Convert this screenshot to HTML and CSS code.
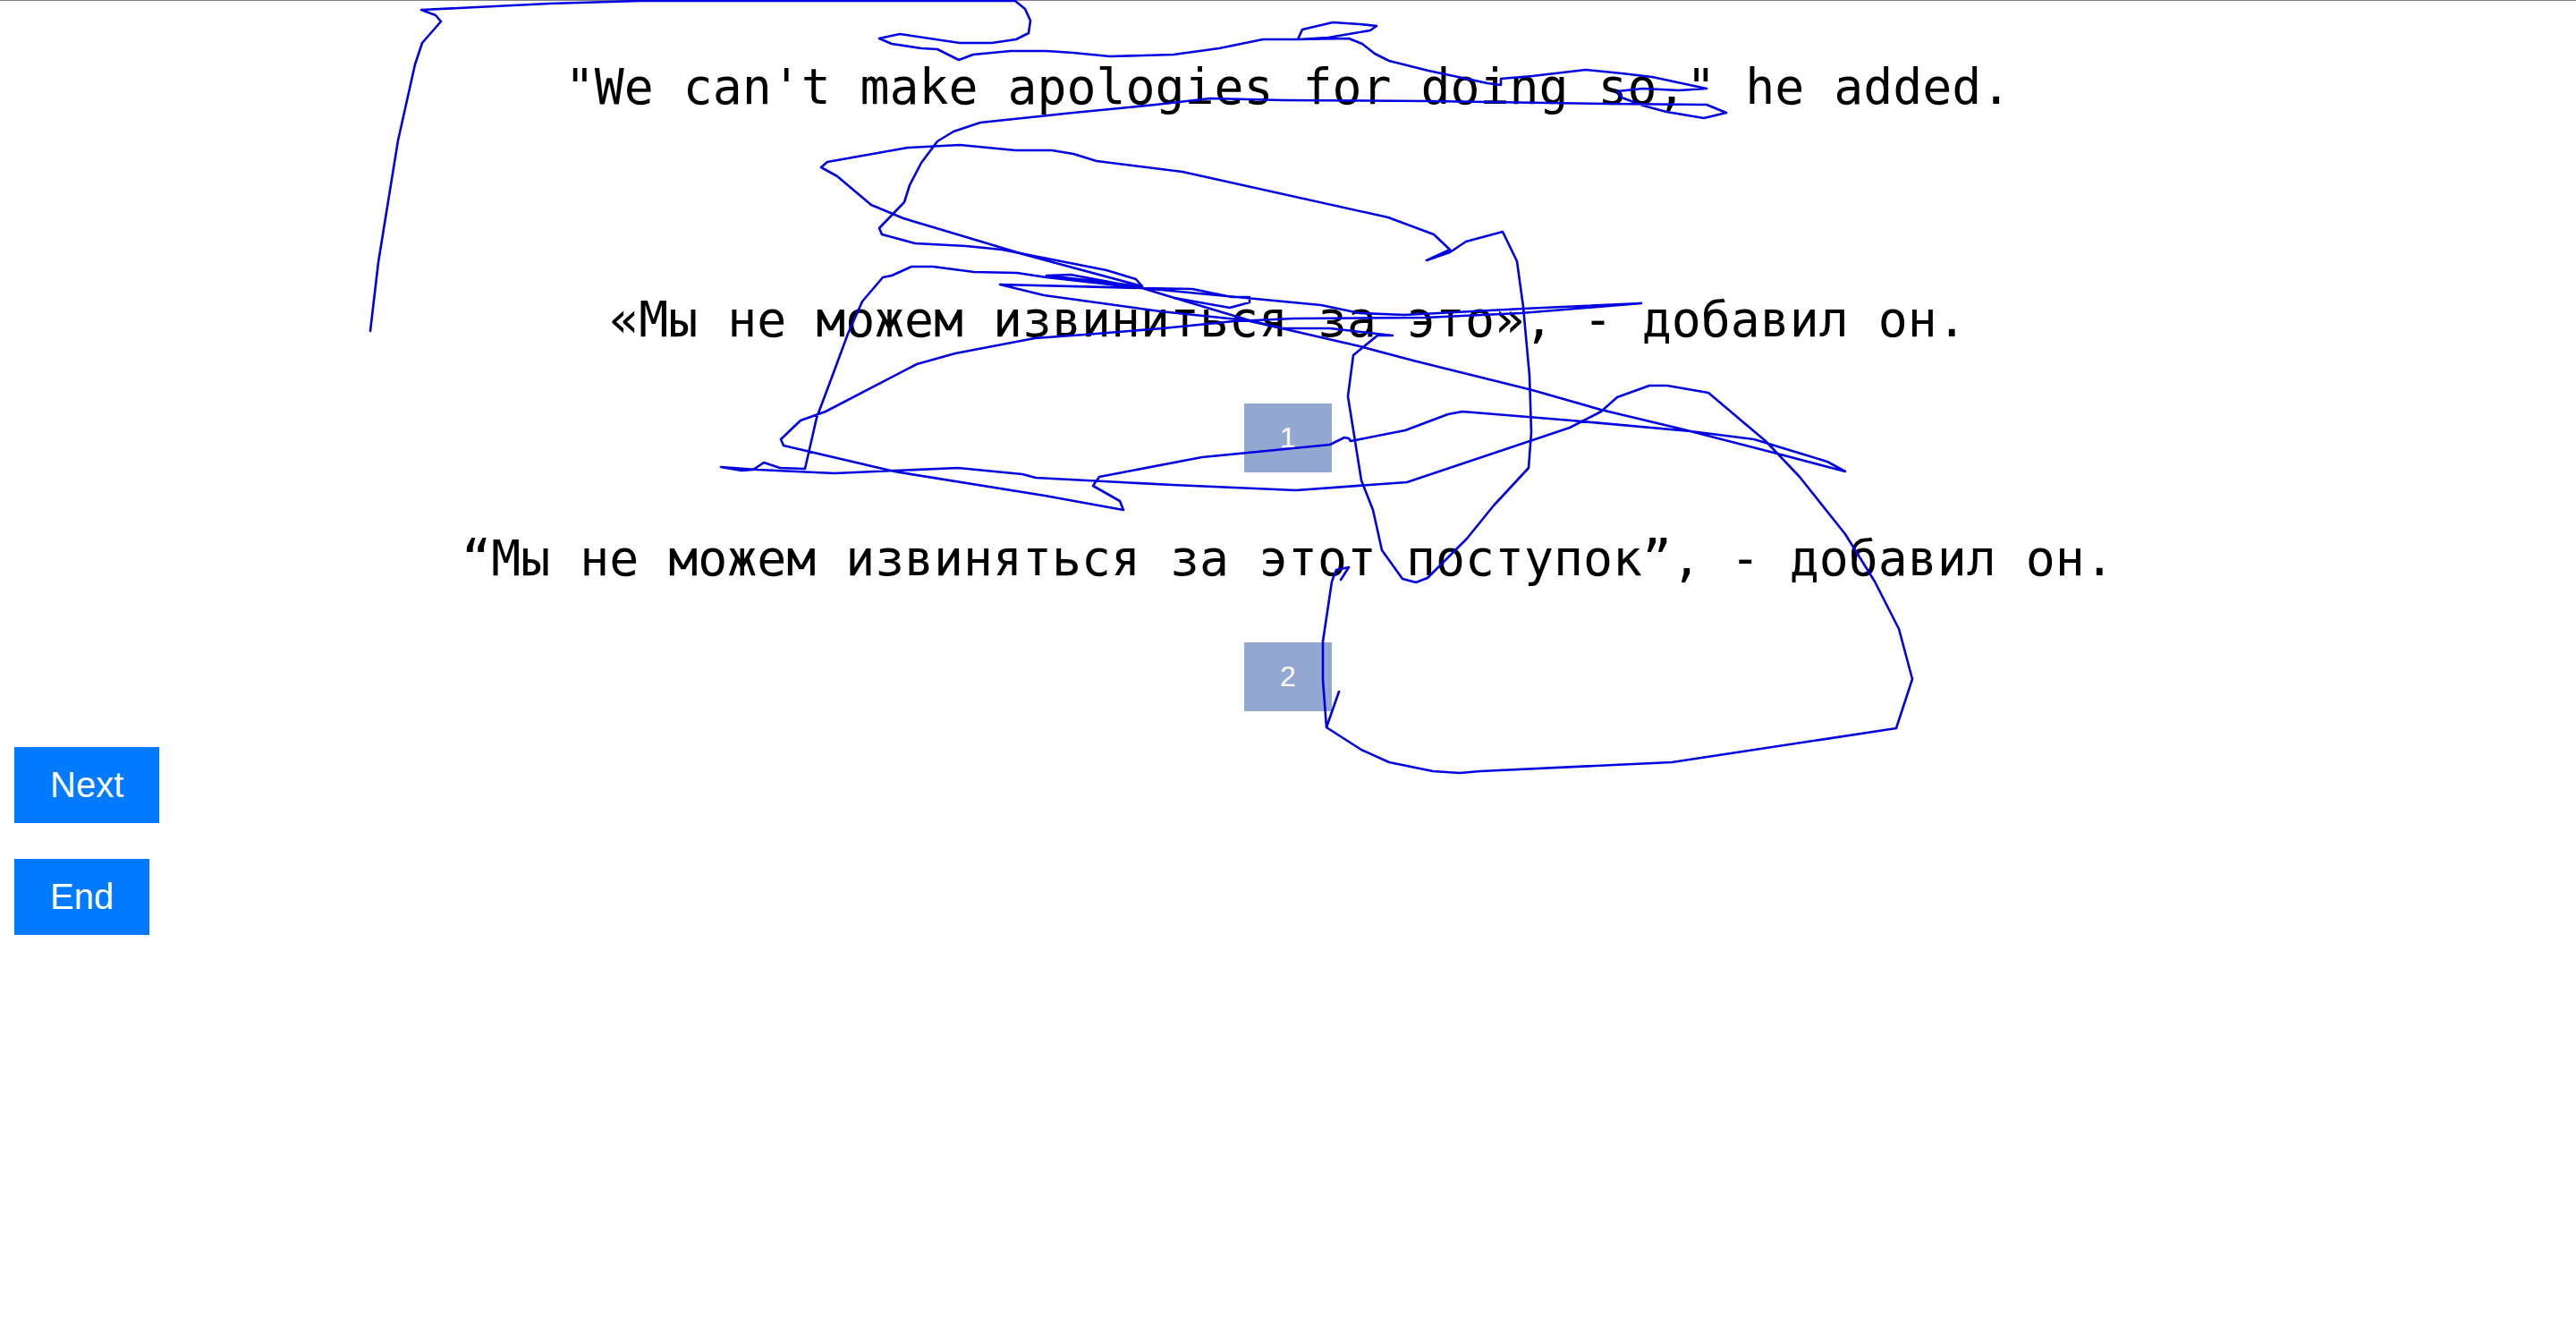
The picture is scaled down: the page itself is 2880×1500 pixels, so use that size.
FILE: index.html
```html
<!DOCTYPE html>
<html lang="en">

<head>
    <meta charset="UTF-8">
    <title>Translation ranking</title>
    <link rel="stylesheet" href="styles.css">
</head>

<body>
    <!-- Sentences -->
    <section class="sentences">
        <p class="sentence source">"We can't make apologies for doing so," he added.</p>

        <p class="sentence">«Мы не можем извиниться за это», - добавил он.</p>
        <button class="rank">1</button>

        <p class="sentence">“Мы не можем извиняться за этот поступок”, - добавил он.</p>
        <button class="rank">2</button>
    </section>

    <!-- Actions -->
    <nav class="actions">
        <button class="action">Next</button>
        <button class="action">End</button>
    </nav>

    <!-- Pen drawing over the page -->
    <svg class="ink" viewBox="0 0 2880 1500" width="2880" height="1500">
        <polyline points="414,370 423,293 445,157 464,72 472,48 493,24 487,17 471,11 614,4 716,1 1135,1 1146,10 1152,23 1150,37 1136,44 1109,48 1073,48 1006,38 983,43 997,49 1030,54 1048,55 1072,67 1088,61 1130,57 1170,57 1200,59 1241,63 1312,61 1363,54 1412,44 1451,44 1456,33 1490,25 1520,27 1539,29 1532,34 1485,42 1451,44 1508,43 1523,49 1537,60 1553,68 1597,79 1663,93 1678,95 1678,88 1713,85 1773,78 1813,82 1847,86 1908,99 1877,101 1837,99 1808,102 1813,109 1837,118 1863,125 1905,132 1930,126 1908,117 1797,116 1730,115 1597,113 1435,112 1353,110 1292,117 1200,126 1096,137 1066,147 1048,158 1030,182 1017,207 1011,226 983,255 986,262 1023,272 1080,275 1120,279 1237,302 1270,312 1277,320 1170,308 1197,307 1277,322 1333,323 1377,332 1397,332 1397,338 1375,344 1313,333 1277,322 1118,318 1167,330 1297,348 1393,358 1433,367 1520,387 1580,403 1713,436 1790,458 1882,480 1987,507 2063,527 2043,516 1961,491 1890,482 1757,470 1635,460 1619,463 1571,481 1510,493 1508,490 1503,489 1487,497 1344,511 1229,533 1222,543 1252,560 1256,570 1168,554 1000,527 876,498 873,491 895,470 923,460 1025,407 1068,395 1157,378 1213,374 1300,367 1380,359 1447,356 1593,355 1700,350 1835,339 1703,345 1570,352 1520,350 1477,341 1277,322 1170,310 1137,305 1089,304 1043,298 1019,298 997,308 987,310 964,337 948,373 931,419 913,467 900,524 872,523 854,517 842,525 829,526 806,522 847,525 933,529 1000,526 1071,523 1143,530 1158,534 1311,542 1449,548 1573,539 1755,478 1790,460 1808,444 1844,431 1864,431 1910,439 1974,493 2012,533 2063,597 2096,650 2123,703 2138,759 2120,814 1869,852 1655,862 1632,864 1602,862 1553,852 1522,838 1483,813 1497,773 1483,813 1479,760 1479,717 1489,650 1494,637 1508,634 1499,648" />
        <polyline points="1277,320 1147,285 1010,244 974,229 936,197 918,187 925,181 1015,165 1073,162 1135,168 1176,168 1200,172 1226,180 1322,192 1552,243 1603,262 1621,279 1595,291 1621,282 1639,270 1680,259 1696,292 1703,343 1710,420 1712,483 1709,523 1670,565 1640,602 1596,646 1583,651 1568,647 1545,615 1535,570 1522,537 1507,443 1513,397 1540,375 1557,375 1487,367 1433,367 1393,357 1313,333" />
    </svg>
</body>

</html>
```
FILE: styles.css
```css
/* General */
body {
    margin: 0;
    padding: 0;
    background-color: white;
    border-top: 1px solid #808080;
    font-family: "Liberation Sans", Arial, sans-serif;
}

/* Sentences */
.sentences {
    display: flex;
    flex-direction: column;
    align-items: center;
    padding-top: 64px;
}

.sentence {
    margin: 0 0 62px;
    font-family: "DejaVu Sans Mono", monospace;
    font-size: 54.8px;
    line-height: 64px;
    color: black;
    white-space: nowrap;
}

.source {
    margin-bottom: 196px;
}

.rank {
    width: 98px;
    height: 77px;
    margin-bottom: 64px;
    padding: 0;
    border: none;
    background-color: #92a8d1;
    color: white;
    font-family: "Liberation Sans", Arial, sans-serif;
    font-size: 32px;
}

.rank:last-child {
    margin-bottom: 40px;
}

/* Actions */
.actions {
    display: flex;
    flex-direction: column;
    align-items: flex-start;
    gap: 40px;
    padding-left: 16px;
}

.action {
    padding: 20px 40px;
    border: none;
    background-color: #007bff;
    color: white;
    font-family: "Liberation Sans", Arial, sans-serif;
    font-size: 40px;
    line-height: 45px;
}

/* Pen drawing */
.ink {
    position: absolute;
    top: 0;
    left: 0;
    pointer-events: none;
}

.ink polyline {
    fill: none;
    stroke: #0000e0;
    stroke-width: 2.6;
    stroke-linejoin: round;
    stroke-linecap: round;
}
```
